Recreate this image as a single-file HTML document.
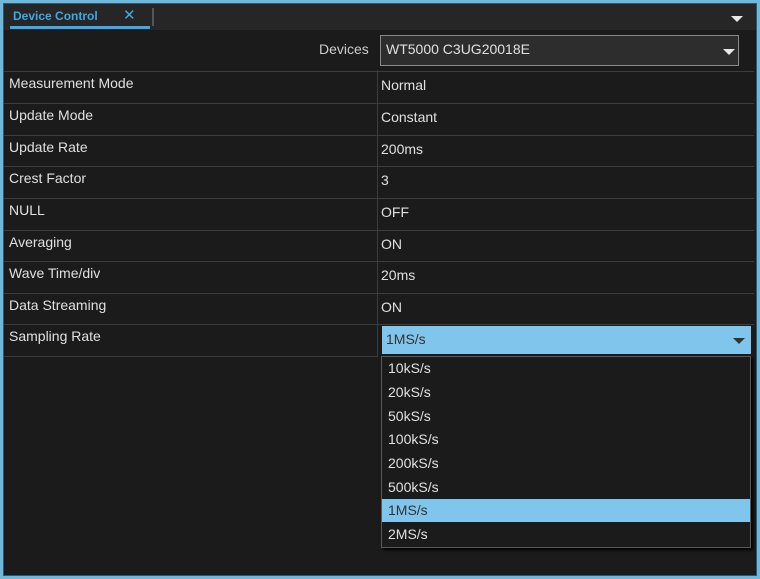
<!DOCTYPE html>
<html><head><style>
*{margin:0;padding:0;box-sizing:border-box}
body{width:760px;height:579px;background:#6fb8dc;font-family:"Liberation Sans",sans-serif;overflow:hidden;position:relative}
#win{position:absolute;left:3px;top:3px;width:754px;height:573px;background:#1b1b1b;border:1px solid #2c5a72}
#tabbar{position:absolute;left:0;top:0;width:752px;height:26px;background:#262626}
.tab{position:absolute;left:9px;top:5px;color:#3da9e6;font-size:12px;font-weight:bold}
.tabx{position:absolute;left:119px;top:2px;color:#3da9e6;font-size:15px}
.tabline{position:absolute;left:6px;top:22px;width:140px;height:3px;background:#3da9e6}
.sep{position:absolute;left:148px;top:4px;width:2px;height:18px;background:#555}
.tri{position:absolute;width:0;height:0;border-left:6px solid transparent;border-right:6px solid transparent;border-top:6px solid #e8e8e8}
.t{position:absolute;color:#e0e0e0;font-size:14px}
.row{position:absolute;left:0;width:750px;border-top:1px solid #3c3c3c}
.vl{position:absolute;left:373px;top:66px;width:1px;height:286px;background:#3c3c3c}
</style></head><body>
<div id="win">
<div id="tabbar">
<div class="tab">Device Control</div><div class="tabx">✕</div>
<div class="tabline"></div><div class="sep"></div>
<div class="tri" style="left:727px;top:12px"></div>
</div>
<div class="t" style="left:315px;top:37px;color:#ccc">Devices</div>
<div style="position:absolute;left:376px;top:31px;width:359px;height:31px;background:#2d2d2d;border:1px solid #8a8a8a"></div>
<div class="t" style="left:382px;top:37px">WT5000 C3UG20018E</div>
<div class="tri" style="left:719px;top:45px"></div>
<div class="vl"></div>
<div class="row" style="top:67px"></div>
<div class="row" style="top:99px"></div>
<div class="row" style="top:131px"></div>
<div class="row" style="top:162px"></div>
<div class="row" style="top:194px"></div>
<div class="row" style="top:226px"></div>
<div class="row" style="top:257px"></div>
<div class="row" style="top:289px"></div>
<div class="row" style="top:320px"></div>
<div class="row" style="top:352px;width:374px"></div>
<div class="t" style="left:5px;top:71px">Measurement Mode</div><div class="t" style="left:377px;top:73px">Normal</div>
<div class="t" style="left:5px;top:103px">Update Mode</div><div class="t" style="left:377px;top:105px">Constant</div>
<div class="t" style="left:5px;top:135px">Update Rate</div><div class="t" style="left:377px;top:137px">200ms</div>
<div class="t" style="left:5px;top:166px">Crest Factor</div><div class="t" style="left:377px;top:168px">3</div>
<div class="t" style="left:5px;top:198px">NULL</div><div class="t" style="left:377px;top:200px">OFF</div>
<div class="t" style="left:5px;top:230px">Averaging</div><div class="t" style="left:377px;top:232px">ON</div>
<div class="t" style="left:5px;top:261px">Wave Time/div</div><div class="t" style="left:377px;top:263px">20ms</div>
<div class="t" style="left:5px;top:293px">Data Streaming</div><div class="t" style="left:377px;top:295px">ON</div>
<div class="t" style="left:5px;top:324px">Sampling Rate</div>
<div style="position:absolute;left:378px;top:322px;width:369px;height:28px;background:#80c5ec"></div>
<div class="t" style="left:382px;top:327px;color:#333">1MS/s</div>
<div class="tri" style="left:729px;top:334px;border-top-color:#333"></div>
<div style="position:absolute;left:377px;top:352px;width:370px;height:192px;background:#1b1b1b;border:1px solid #5a5a5a;box-shadow:2px 2px 3px #000"></div>
<div style="position:absolute;left:378px;top:495px;width:368px;height:23px;background:#80c5ec"></div>
<div class="t" style="left:384px;top:356px">10kS/s</div>
<div class="t" style="left:384px;top:380px">20kS/s</div>
<div class="t" style="left:384px;top:404px">50kS/s</div>
<div class="t" style="left:384px;top:427px">100kS/s</div>
<div class="t" style="left:384px;top:451px">200kS/s</div>
<div class="t" style="left:384px;top:475px">500kS/s</div>
<div class="t" style="left:384px;top:498px;color:#333">1MS/s</div>
<div class="t" style="left:384px;top:522px">2MS/s</div>
</div>
</body></html>
